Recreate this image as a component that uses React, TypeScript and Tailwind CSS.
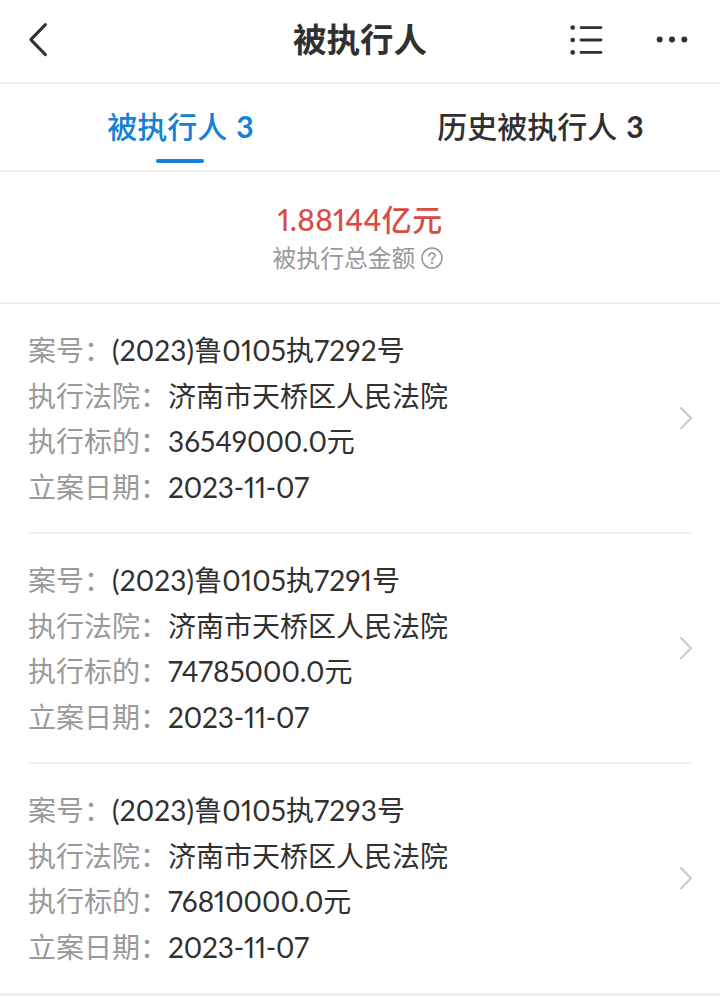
const cases = [
  { id: "(2023)鲁0105执7292号", court: "济南市天桥区人民法院", amount: "36549000.0元", date: "2023-11-07" },
  { id: "(2023)鲁0105执7291号", court: "济南市天桥区人民法院", amount: "74785000.0元", date: "2023-11-07" },
  { id: "(2023)鲁0105执7293号", court: "济南市天桥区人民法院", amount: "76810000.0元", date: "2023-11-07" },
];

const Row = ({ label, value, className = "" }: { label: string; value: string; className?: string }) => (
  <div className="flex h-[45.5px] items-center whitespace-nowrap text-[28px]">
    <span className="text-[#999999]">{label}：</span>
    <span className={`proportional-nums text-[#303030] ${className}`}>{value}</span>
  </div>
);

const App = () => {
  return (
    <div className="h-[996px] w-[720px] overflow-hidden bg-white font-['Lato','Noto_Sans_CJK_SC',sans-serif] text-[#303030]">
      <header className="grid h-[84px] grid-cols-[1fr_auto_1fr] items-center border-b-2 border-[#f0f0f0] px-7 pb-1">
        <svg
          className="h-9 w-6"
          viewBox="0 0 24 36"
          fill="none"
          stroke="currentColor"
          strokeWidth="3"
          strokeLinecap="round"
          strokeLinejoin="round"
        >
          <path d="M17.4 3.6 2.8 18.6l14.6 15" />
        </svg>
        <h1 className="text-[33.5px] leading-[50px] font-bold">被执行人</h1>
        <div className="flex items-center justify-end gap-12">
          <svg className="h-8 w-9" viewBox="0 0 36 32" fill="currentColor">
            <circle cx="4.7" cy="4.6" r="2.3" />
            <circle cx="4.7" cy="17" r="2.3" />
            <circle cx="4.7" cy="29.4" r="2.3" />
            <path
              d="M13 4.6h20M13 17h20M13 29.4h20"
              stroke="currentColor"
              strokeWidth="2.8"
              strokeLinecap="round"
            />
          </svg>
          <svg className="h-8 w-10" viewBox="0 0 40 32" fill="currentColor">
            <circle cx="7.7" cy="16.4" r="3" />
            <circle cx="20" cy="16.4" r="3" />
            <circle cx="32.3" cy="16.4" r="3" />
          </svg>
        </div>
      </header>

      <nav className="grid h-[88px] grid-cols-2 border-b-2 border-[#f0f0f0] text-[30px] font-medium">
        <div className="flex flex-col items-center text-[#1580d8]">
          <span className="flex h-[75px] items-center gap-[9px] pt-2.5 pl-px">
            被执行人 <b>3</b>
          </span>
          <span className="h-1 w-12 rounded-full bg-[#1580d8]" />
        </div>
        <div className="flex h-[75px] items-center justify-center gap-[9px] pt-2.5 pl-px">
          历史被执行人 <b>3</b>
        </div>
      </nav>

      <section className="flex h-[132px] flex-col items-center border-b-2 border-[#f0f0f0] pt-[27px]">
        <div className="text-[30px] leading-10 font-medium tracking-[0.3px] text-[#d84c43] proportional-nums">
          1.88144亿元
        </div>
        <div className="flex items-center gap-1.5 pr-1 text-[23.8px] leading-[38px] text-[#999999]">
          被执行总金额
          <svg
            className="size-[22px]"
            viewBox="0 0 22 22"
            fill="none"
            stroke="currentColor"
            strokeWidth="1.6"
            strokeLinecap="round"
          >
            <circle cx="11" cy="11" r="10" />
            <path d="M8 8.9c0-1.7 1.2-2.9 3-2.9s3 1.1 3 2.6c0 2-3 2.2-3 4.3" />
            <circle cx="11" cy="15.8" r="0.5" fill="currentColor" />
          </svg>
        </div>
      </section>

      <main>
        {cases.map((item) => (
          <article
            key={item.id}
            className="mx-7 flex h-[230px] items-center justify-between border-b-2 border-[#f0f0f0] last:mx-0 last:h-[232px] last:border-b-3 last:px-7 last:pb-px"
          >
            <div className="pt-px">
              <Row label="案号" value={item.id} className="tracking-[0.15px]" />
              <Row label="执行法院" value={item.court} />
              <Row label="执行标的" value={item.amount} />
              <Row label="立案日期" value={item.date} className="tracking-[-0.15px]" />
            </div>
            <svg
              className="h-6 w-[14px]"
              viewBox="0 0 14 24"
              fill="none"
              stroke="#c8c8c8"
              strokeWidth="2"
              strokeLinecap="round"
            >
              <path d="m3 2 10 10.2L3 22.4" />
            </svg>
          </article>
        ))}
      </main>
    </div>
  );
};

export default App;
